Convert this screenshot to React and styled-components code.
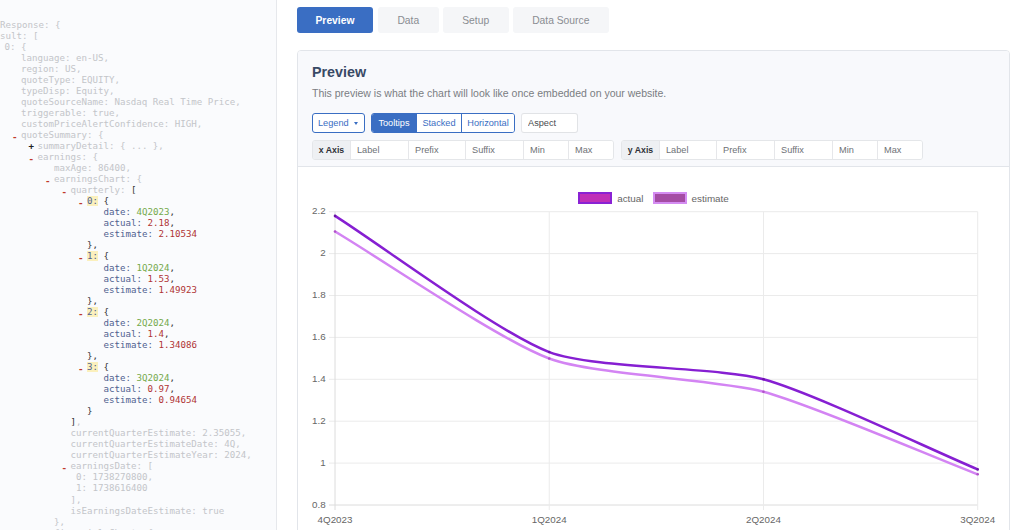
import React from "react";
import styled, { createGlobalStyle } from "styled-components";

const GlobalStyle = createGlobalStyle`
  html, body { margin: 0; padding: 0; background: #fff; overflow: hidden; }
  body { font-family: "Liberation Sans", Arial, sans-serif; }
  * { box-sizing: border-box; }
`;

const Page = styled.div`
  display: grid;
  grid-template-columns: 277px 1fr;
  width: 1024px;
  height: 530px;
  overflow: hidden;
`;

/* ---------- code panel ---------- */
const CodePanel = styled.div`
  background: #fafbfd;
  border-right: 1px solid #e6e8ec;
  overflow: hidden;
  padding-top: 19.5px;
  font-family: "DejaVu Sans Mono", "Liberation Mono", monospace;
  font-size: 9.15px;
  line-height: 11.05px;
  white-space: pre;
  color: #c3c5c9;
`;

const Line = styled.div`
  height: 11.05px;
  padding-left: ${(p) => p.$x}px;
`;

const Marker = styled.span`
  display: inline-block;
  width: 9px;
  margin-left: -9px;
  font-weight: bold;
  color: ${(p) => (p.$kind === "+" ? "#222" : "#c0392b")};
  transform: ${(p) => (p.$kind === "+" ? "none" : "translateY(2px)")};
`;

const COLORS = {
  f: "#c3c5c9",
  k: "#50618f",
  g: "#74a94a",
  r: "#b03434",
  p: "#333",
};

const Tok = styled.span`
  color: ${(p) => COLORS[p.$c]};
`;

const Idx = styled.span`
  color: #50618f;
  background: #fbf0bd;
`;

const lx = (L) => (L <= 0 ? 0 : 4.5 + (L - 1) * 16.5);

const item = (i, date, actual, estimate, last) => [
  { L: 6, m: "-", t: [["i", `${i}:`], ["p", " {"]] },
  { L: 7, t: [["k", "date: "], ["g", date], ["p", ","]] },
  { L: 7, t: [["k", "actual: "], ["r", actual], ["p", ","]] },
  { L: 7, t: [["k", "estimate: "], ["r", estimate]] },
  { L: 6, t: [["p", last ? "}" : "},"]] },
];

const LINES = [
  { L: -1, t: [["f", "Response: {"]] },
  { L: 0, t: [["f", "sult: ["]] },
  { L: 1, t: [["f", "0: {"]] },
  { L: 2, t: [["f", "language: en-US,"]] },
  { L: 2, t: [["f", "region: US,"]] },
  { L: 2, t: [["f", "quoteType: EQUITY,"]] },
  { L: 2, t: [["f", "typeDisp: Equity,"]] },
  { L: 2, t: [["f", "quoteSourceName: Nasdaq Real Time Price,"]] },
  { L: 2, t: [["f", "triggerable: true,"]] },
  { L: 2, t: [["f", "customPriceAlertConfidence: HIGH,"]] },
  { L: 2, m: "-", t: [["f", "quoteSummary: {"]] },
  { L: 3, m: "+", t: [["f", "summaryDetail: { ... },"]] },
  { L: 3, m: "-", t: [["f", "earnings: {"]] },
  { L: 4, t: [["f", "maxAge: 86400,"]] },
  { L: 4, m: "-", t: [["f", "earningsChart: {"]] },
  { L: 5, m: "-", t: [["f", "quarterly: "], ["p", "["]] },
  ...item(0, "4Q2023", "2.18", "2.10534"),
  ...item(1, "1Q2024", "1.53", "1.49923"),
  ...item(2, "2Q2024", "1.4", "1.34086"),
  ...item(3, "3Q2024", "0.97", "0.94654", true),
  { L: 5, t: [["p", "]"], ["f", ","]] },
  { L: 5, t: [["f", "currentQuarterEstimate: 2.35055,"]] },
  { L: 5, t: [["f", "currentQuarterEstimateDate: 4Q,"]] },
  { L: 5, t: [["f", "currentQuarterEstimateYear: 2024,"]] },
  { L: 5, m: "-", t: [["f", "earningsDate: ["]] },
  { L: 5, t: [["f", " 0: 1738270800,"]] },
  { L: 5, t: [["f", " 1: 1738616400"]] },
  { L: 5, t: [["f", "],"]] },
  { L: 5, t: [["f", "isEarningsDateEstimate: true"]] },
  { L: 4, t: [["f", "},"]] },
  { L: 4, t: [["f", "financialsChart: {"]] },
];

function Code() {
  return (
    <CodePanel>
      {LINES.map((ln, i) => (
        <Line key={i} $x={lx(ln.L)}>
          {ln.m && <Marker $kind={ln.m}>{ln.m === "+" ? "+" : "-"}</Marker>}
          {ln.t.map(([c, s], j) =>
            c === "i" ? <Idx key={j}>{s}</Idx> : <Tok key={j} $c={c}>{s}</Tok>
          )}
        </Line>
      ))}
    </CodePanel>
  );
}

/* ---------- main area ---------- */
const Main = styled.div`
  padding: 7px 14px 0 20px;
  display: flex;
  flex-direction: column;
  min-width: 0;
`;

const Tabs = styled.div`
  display: flex;
  gap: 4px;
`;

const Tab = styled.div`
  height: 26px;
  padding: 0 ${(p) => (p.$active ? 18.5 : 19.5)}px;
  margin-right: ${(p) => (p.$active ? 1 : 0)}px;
  display: flex;
  align-items: center;
  border-radius: 3px;
  font-size: 10.3px;
  background: ${(p) => (p.$active ? "#3a6ec3" : "#f5f6f8")};
  color: ${(p) => (p.$active ? "#fff" : "#8a8d92")};
  font-weight: ${(p) => (p.$active ? "bold" : "normal")};
`;

const Card = styled.div`
  margin-top: 17px;
  border: 1px solid #e2e5ea;
  border-radius: 4px;
  height: 520px;
  display: flex;
  flex-direction: column;
  overflow: hidden;
`;

const CardHeader = styled.div`
  background: #f8f9fc;
  border-bottom: 1px solid #e2e5ea;
  padding: 12px 14px 6px;
`;

const Title = styled.div`
  font-size: 14.3px;
  font-weight: bold;
  color: #384a66;
  line-height: 18px;
`;

const Subtitle = styled.div`
  margin-top: 5px;
  font-size: 10.5px;
  line-height: 14px;
  color: #7a7d82;
`;

const ControlRow = styled.div`
  display: flex;
  align-items: center;
  gap: ${(p) => p.$gap || 6}px;
  margin-top: ${(p) => p.$mt}px;
`;

const OutlineButton = styled.div`
  height: 20px;
  width: 53px;
  padding: 0 0 0 5px;
  display: flex;
  align-items: center;
  gap: 5px;
  border: 1px solid #3a6ec3;
  border-radius: 3px;
  background: #fff;
  color: #3a6ec3;
  font-size: 9.2px;
`;

const Caret = styled.span`
  width: 0;
  height: 0;
  border-left: 2.5px solid transparent;
  border-right: 2.5px solid transparent;
  border-top: 3px solid #3a6ec3;
`;

const BtnGroup = styled.div`
  display: flex;
  height: 20px;
  border: 1px solid #3a6ec3;
  border-radius: 3px;
  overflow: hidden;
`;

const GroupBtn = styled.div`
  display: flex;
  align-items: center;
  justify-content: center;
  width: ${(p) => p.$w}px;
  font-size: 9.2px;
  background: ${(p) => (p.$active ? "#3a6ec3" : "#fff")};
  color: ${(p) => (p.$active ? "#fff" : "#3a6ec3")};
  & + & {
    border-left: 1px solid #3a6ec3;
  }
`;

const TextInput = styled.input`
  height: ${(p) => (p.$inGroup ? "100%" : "20px")};
  width: ${(p) => p.$w}px;
  border: ${(p) => (p.$inGroup ? "none" : "1px solid #e1e3e6")};
  border-left: 1px solid #e6e7ea;
  border-radius: ${(p) => (p.$inGroup ? "0" : "3px")};
  background: #fff;
  padding: 0 0 0 6px;
  font-family: "Liberation Sans", Arial, sans-serif;
  font-size: 9.2px;
  outline: none;
  &::placeholder {
    color: ${(p) => (p.$inGroup ? "#6e7176" : "#4a4c50")};
    opacity: 1;
  }
`;

const AxisGroup = styled.div`
  display: flex;
  height: 20px;
  border: 1px solid #e4e6e9;
  border-radius: 3px;
  overflow: hidden;
`;

const Addon = styled.div`
  display: flex;
  align-items: center;
  justify-content: center;
  width: ${(p) => p.$w}px;
  background: #eef0f3;
  color: #2f3237;
  font-size: 8.7px;
  font-weight: bold;
`;

const CardBody = styled.div`
  flex: 1;
  background: #fff;
  display: flex;
  flex-direction: column;
`;

const Legend = styled.div`
  display: flex;
  justify-content: center;
  align-items: center;
  gap: 9px;
  margin-top: 24px;
  height: 14px;
  margin-bottom: 1px;
`;

const LegendItem = styled.div`
  display: flex;
  align-items: center;
  gap: 5px;
  font-size: 9.9px;
  color: #666;
`;

const LegendBox = styled.span`
  width: 34px;
  height: 12px;
  background: ${(p) => p.$fill};
  border: 2px solid ${(p) => p.$stroke};
`;

/* ---------- chart ---------- */
const W = 711;
const H = 324;
const X0 = 37;
const X1 = 679.7;
const Y0 = 5.7;
const Y1 = 299;
const labels = ["4Q2023", "1Q2024", "2Q2024", "3Q2024"];
const actual = [2.18, 1.53, 1.4, 0.97];
const estimate = [2.10534, 1.49923, 1.34086, 0.94654];
const yTicks = [2.2, 2, 1.8, 1.6, 1.4, 1.2, 1, 0.8];

const xOf = (i) => X0 + ((X1 - X0) / 3) * i;
const yOf = (v) => Y1 - ((v - 0.8) / 1.4) * (Y1 - Y0);

/* Chart.js-style bezier spline with a given tension */
function splinePath(vals, t = 0.22) {
  const pts = vals.map((v, i) => ({ x: xOf(i), y: yOf(v) }));
  const cps = pts.map((p, i) => {
    const p0 = pts[i - 1] || p;
    const p2 = pts[i + 1] || p;
    const d01 = Math.hypot(p.x - p0.x, p.y - p0.y);
    const d12 = Math.hypot(p2.x - p.x, p2.y - p.y);
    const sum = d01 + d12 || 1;
    const fa = (t * d01) / sum;
    const fb = (t * d12) / sum;
    return {
      prev: { x: p.x - fa * (p2.x - p0.x), y: p.y - fa * (p2.y - p0.y) },
      next: { x: p.x + fb * (p2.x - p0.x), y: p.y + fb * (p2.y - p0.y) },
    };
  });
  let d = `M${pts[0].x},${pts[0].y}`;
  for (let i = 1; i < pts.length; i++) {
    const a = cps[i - 1].next;
    const b = cps[i].prev;
    d += ` C${a.x},${a.y} ${b.x},${b.y} ${pts[i].x},${pts[i].y}`;
  }
  return { d, pts };
}

const ChartSvg = styled.svg`
  display: block;
  font-family: "Liberation Sans", Arial, sans-serif;
`;

function Chart() {
  const a = splinePath(actual);
  const e = splinePath(estimate);
  return (
    <ChartSvg width={W} height={H} viewBox={`0 0 ${W} ${H}`}>
      {yTicks.map((v) => (
        <g key={v}>
          <line x1={X0 - 6} x2={X1} y1={yOf(v)} y2={yOf(v)} stroke={v === 0.8 ? "#dcdcdc" : "#ebebeb"} strokeWidth="1" />
          <text x={X0 - 9.3} y={yOf(v)} textAnchor="end" dominantBaseline="middle" fontSize="9.8" fill="#666">
            {String(v)}
          </text>
        </g>
      ))}
      {labels.map((l, i) => (
        <g key={l}>
          <line x1={xOf(i)} x2={xOf(i)} y1={Y0} y2={Y1 + 5} stroke={i === 0 ? "#dcdcdc" : "#ebebeb"} strokeWidth="1" />
          <text x={xOf(i)} y={314} textAnchor="middle" dominantBaseline="middle" fontSize="9.8" fill="#666">
            {l}
          </text>
        </g>
      ))}
      <path d={e.d} fill="none" stroke="#d384f3" strokeWidth="2.5" />
      <path d={a.d} fill="none" stroke="#861fd2" strokeWidth="2.5" />
      {e.pts.map((p, i) => (
        <circle key={"e" + i} cx={p.x} cy={p.y} r="1.3" fill="#b050c8" />
      ))}
      {a.pts.map((p, i) => (
        <circle key={"a" + i} cx={p.x} cy={p.y} r="1.3" fill="#6a14a8" />
      ))}
    </ChartSvg>
  );
}

export default function App() {
  return (
    <>
      <GlobalStyle />
      <Page>
        <Code />
        <Main>
          <Tabs>
            <Tab $active>Preview</Tab>
            <Tab>Data</Tab>
            <Tab>Setup</Tab>
            <Tab>Data Source</Tab>
          </Tabs>
          <Card>
            <CardHeader>
              <Title>Preview</Title>
              <Subtitle>This preview is what the chart will look like once embedded on your website.</Subtitle>
              <ControlRow $mt={13}>
                <OutlineButton>
                  Legend <Caret />
                </OutlineButton>
                <BtnGroup>
                  <GroupBtn $active $w={44}>Tooltips</GroupBtn>
                  <GroupBtn $w={45}>Stacked</GroupBtn>
                  <GroupBtn $w={53}>Horizontal</GroupBtn>
                </BtnGroup>
                <TextInput $w={57} placeholder="Aspect" />
              </ControlRow>
              <ControlRow $mt={7} $gap={7}>
                <AxisGroup>
                  <Addon $w={37}>x Axis</Addon>
                  <TextInput $inGroup $w={58} placeholder="Label" />
                  <TextInput $inGroup $w={57} placeholder="Prefix" />
                  <TextInput $inGroup $w={58} placeholder="Suffix" />
                  <TextInput $inGroup $w={45} placeholder="Min" />
                  <TextInput $inGroup $w={45} placeholder="Max" />
                </AxisGroup>
                <AxisGroup>
                  <Addon $w={37}>y Axis</Addon>
                  <TextInput $inGroup $w={57} placeholder="Label" />
                  <TextInput $inGroup $w={58} placeholder="Prefix" />
                  <TextInput $inGroup $w={58} placeholder="Suffix" />
                  <TextInput $inGroup $w={45} placeholder="Min" />
                  <TextInput $inGroup $w={45} placeholder="Max" />
                </AxisGroup>
              </ControlRow>
            </CardHeader>
            <CardBody>
              <Legend>
                <LegendItem>
                  <LegendBox $fill="#c030b8" $stroke="#8a22d4" />
                  actual
                </LegendItem>
                <LegendItem>
                  <LegendBox $fill="#a44ca4" $stroke="#d48cf2" />
                  estimate
                </LegendItem>
              </Legend>
              <Chart />
            </CardBody>
          </Card>
        </Main>
      </Page>
    </>
  );
}
